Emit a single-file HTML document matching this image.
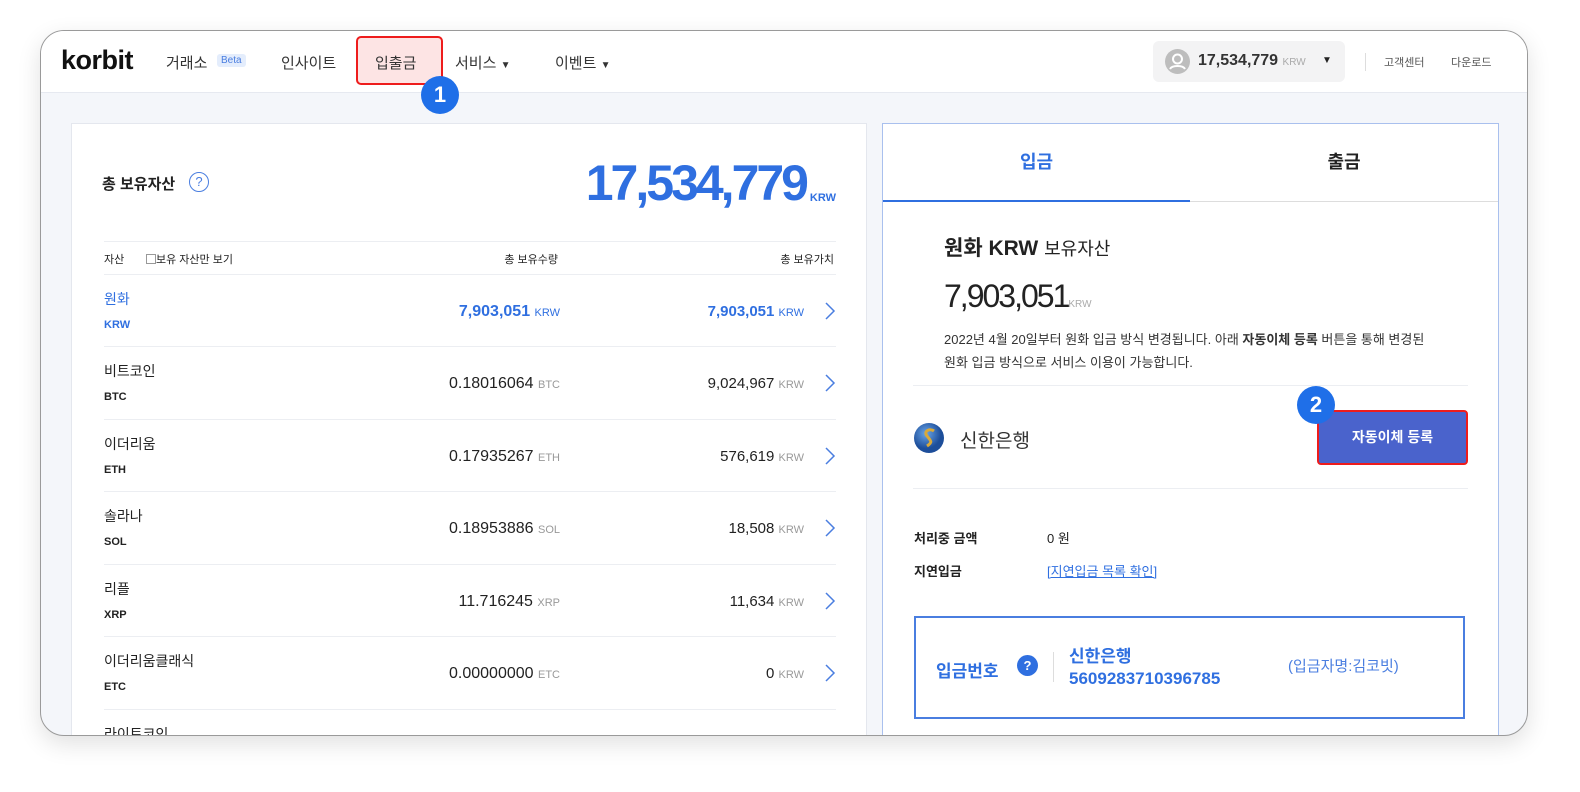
<!DOCTYPE html>
<html><head><meta charset="utf-8"><style>
*{box-sizing:border-box;margin:0;padding:0}
body{width:1580px;height:792px;background:#fff;font-family:"Liberation Sans","Noto Sans CJK KR",sans-serif;color:#222;position:relative;overflow:hidden}
.frame{position:absolute;left:40px;top:30px;width:1488px;height:706px;border:1px solid #9a9a9a;border-radius:24px;overflow:hidden;background:#f4f6fa;box-shadow:0 8px 24px rgba(0,0,0,.12)}
.hdr{position:absolute;left:0;top:0;right:0;height:62px;background:#fff;border-bottom:1px solid #e6e9f0}
.a{position:absolute;white-space:nowrap}
.lp{position:absolute;left:30px;top:92px;width:796px;height:640px;background:#fff;border:1px solid #e4e7ee}
.rp{position:absolute;left:841px;top:92px;width:617px;height:640px;background:#fff;border:1px solid #a9c0ee}
.row{position:absolute;left:32px;width:732px;height:72px;border-top:1px solid #eceef2}
.nm{position:absolute;left:0;top:14px;font-size:14px}
.cd{position:absolute;left:0;top:44px;font-size:11px;font-weight:bold}
.q{position:absolute;right:276px;top:28px;font-size:16px}
.v{position:absolute;right:32px;top:28px;font-size:15px}
.u{font-size:11px;color:#999}
.chev{position:absolute;right:0;top:27px;width:12px;height:18px}
.badge{position:absolute;width:38px;height:38px;border-radius:50%;background:#1f6fe8;color:#fff;font-weight:bold;font-size:22px;text-align:center;line-height:38px}
</style></head><body>
<div class="frame">
 <div class="hdr">
  <div class="a" style="left:20px;top:14px;font-size:27px;font-weight:bold;letter-spacing:-0.5px;color:#111">korbit</div>
  <div class="a" style="left:125px;top:21px;font-size:15px;color:#333">거래소</div>
  <div class="a" style="left:176px;top:23px;font-size:10px;color:#4a7ee0;background:#e4edfc;padding:1px 4px;border-radius:3px">Beta</div>
  <div class="a" style="left:240px;top:21px;font-size:15px;color:#333">인사이트</div>
  <div class="a" style="left:315px;top:5px;width:87px;height:49px;border:2px solid #ee1c1c;border-radius:5px;background:#fde4e4"></div>
  <div class="a" style="left:334px;top:21px;font-size:15px;color:#333">입출금</div>
  <div class="a" style="left:414px;top:21px;font-size:15px;color:#333">서비스 <span style="font-size:10px">▼</span></div>
  <div class="a" style="left:514px;top:21px;font-size:15px;color:#333">이벤트 <span style="font-size:10px">▼</span></div>
  <div class="a" style="left:1112px;top:10px;width:192px;height:41px;background:#f3f3f4;border-radius:6px"></div>
  <svg class="a" style="left:1124px;top:18px" width="25" height="25" viewBox="0 0 25 25"><circle cx="12.5" cy="12.5" r="12.5" fill="#bdbdbd"/><circle cx="12.5" cy="10" r="4.5" fill="none" stroke="#fff" stroke-width="2"/><path d="M5 20c2-4 13-4 15 0" fill="none" stroke="#fff" stroke-width="2"/></svg>
  <div class="a" style="left:1157px;top:21px;font-size:16px;font-weight:bold;color:#333">17,534,779 <span style="font-size:10px;color:#aaa;font-weight:normal">KRW</span></div>
  <div class="a" style="left:1281px;top:24px;font-size:10px">▼</div>
  <div class="a" style="left:1324px;top:22px;width:1px;height:18px;background:#ddd"></div>
  <div class="a" style="left:1343px;top:23px;font-size:11px;color:#555">고객센터</div>
  <div class="a" style="left:1410px;top:23px;font-size:11px;color:#555">다운로드</div>
 </div>
 <div class="badge" style="left:380px;top:45px">1</div>

 <div class="lp">
  <div class="a" style="left:30px;top:49px;font-size:15px;font-weight:bold">총 보유자산</div>
  <div class="a" style="left:117px;top:48px;width:20px;height:20px;border:1.5px solid #4a7ee0;border-radius:50%;color:#4a7ee0;font-size:13px;text-align:center;line-height:17px">?</div>
  <div class="a" style="right:60px;top:30px;font-size:50px;font-weight:bold;color:#2f6fe0;letter-spacing:-3px">17,534,779</div>
  <div class="a" style="right:30px;top:68px;font-size:11px;color:#2f6fe0;font-weight:bold">KRW</div>
  <div class="a" style="left:32px;top:117px;width:732px;height:1px;background:#eceef2"></div>
  <div class="a" style="left:32px;top:127px;font-size:11px">자산</div>
  <div class="a" style="left:74px;top:127px;font-size:11px"><span style="display:inline-block;width:10px;height:10px;border:1px solid #999;vertical-align:-1px"></span>보유 자산만 보기</div>
  <div class="a" style="right:308px;top:127px;font-size:11px">총 보유수량</div>
  <div class="a" style="right:32px;top:127px;font-size:11px">총 보유가치</div>
  <div class="row" style="top:150px"><div class="nm" style="color:#2f6fe0">원화</div><div class="cd" style="color:#2f6fe0">KRW</div><div class="q" style="color:#2f6fe0;font-weight:bold">7,903,051 <span class="u" style="color:#2f6fe0;font-weight:normal">KRW</span></div><div class="v" style="color:#2f6fe0;font-weight:bold">7,903,051 <span class="u" style="color:#2f6fe0;font-weight:normal">KRW</span></div><svg class="chev" viewBox="0 0 12 18"><path d="M2 1l8 8-8 8" fill="none" stroke="#4a7ee0" stroke-width="1.5"/></svg></div>
  <div class="row" style="top:222px"><div class="nm">비트코인</div><div class="cd">BTC</div><div class="q">0.18016064 <span class="u">BTC</span></div><div class="v">9,024,967 <span class="u">KRW</span></div><svg class="chev" viewBox="0 0 12 18"><path d="M2 1l8 8-8 8" fill="none" stroke="#4a7ee0" stroke-width="1.5"/></svg></div>
  <div class="row" style="top:295px"><div class="nm">이더리움</div><div class="cd">ETH</div><div class="q">0.17935267 <span class="u">ETH</span></div><div class="v">576,619 <span class="u">KRW</span></div><svg class="chev" viewBox="0 0 12 18"><path d="M2 1l8 8-8 8" fill="none" stroke="#4a7ee0" stroke-width="1.5"/></svg></div>
  <div class="row" style="top:367px"><div class="nm">솔라나</div><div class="cd">SOL</div><div class="q">0.18953886 <span class="u">SOL</span></div><div class="v">18,508 <span class="u">KRW</span></div><svg class="chev" viewBox="0 0 12 18"><path d="M2 1l8 8-8 8" fill="none" stroke="#4a7ee0" stroke-width="1.5"/></svg></div>
  <div class="row" style="top:440px"><div class="nm">리플</div><div class="cd">XRP</div><div class="q">11.716245 <span class="u">XRP</span></div><div class="v">11,634 <span class="u">KRW</span></div><svg class="chev" viewBox="0 0 12 18"><path d="M2 1l8 8-8 8" fill="none" stroke="#4a7ee0" stroke-width="1.5"/></svg></div>
  <div class="row" style="top:512px"><div class="nm">이더리움클래식</div><div class="cd">ETC</div><div class="q">0.00000000 <span class="u">ETC</span></div><div class="v">0 <span class="u">KRW</span></div><svg class="chev" viewBox="0 0 12 18"><path d="M2 1l8 8-8 8" fill="none" stroke="#4a7ee0" stroke-width="1.5"/></svg></div>
  <div class="row" style="top:585px"><div class="nm">라이트코인</div></div>
 </div>

 <div class="rp">
  <div class="a" style="left:0;top:0;width:307px;height:78px;border-bottom:2px solid #2f6fe0;text-align:center;line-height:76px;font-size:18px;font-weight:bold;color:#2f6fe0">입금</div>
  <div class="a" style="left:307px;top:0;width:308px;height:78px;border-bottom:1px solid #ddd;text-align:center;line-height:76px;font-size:18px;font-weight:bold">출금</div>
  <div class="a" style="left:61px;top:108px;font-size:21px;font-weight:bold">원화 KRW <span style="font-weight:normal;font-size:18px">보유자산</span></div>
  <div class="a" style="left:61px;top:154px;font-size:32px;letter-spacing:-2px">7,903,051<span style="font-size:10px;color:#aaa;letter-spacing:0">KRW</span></div>
  <div class="a" style="left:61px;top:204px;font-size:13px;line-height:23px;color:#333">2022년 4월 20일부터 원화 입금 방식 변경됩니다. 아래 <b>자동이체 등록</b> 버튼을 통해 변경된<br>원화 입금 방식으로 서비스 이용이 가능합니다.</div>
  <div class="a" style="left:30px;top:261px;width:555px;height:1px;background:#eceef2"></div>
  <svg class="a" style="left:30px;top:298px" width="32" height="32" viewBox="0 0 32 32"><defs><radialGradient id="g" cx=".4" cy=".35"><stop offset="0" stop-color="#6aa6e8"/><stop offset="1" stop-color="#1d4e9a"/></radialGradient></defs><circle cx="16" cy="16" r="15" fill="url(#g)"/><path d="M21 9c-4-3-11 0-7 5s6 6 0 10" fill="none" stroke="#d9a93a" stroke-width="3"/></svg>
  <div class="a" style="left:77px;top:302px;font-size:19px;color:#333">신한은행</div>
  <div class="a" style="left:434px;top:286px;width:151px;height:55px;border:2px solid #ee1c1c;border-radius:4px;background:#4a63cc;color:#fff;font-size:14px;font-weight:bold;text-align:center;line-height:51px">자동이체 등록</div>
  <div class="a" style="left:30px;top:364px;width:555px;height:1px;background:#eceef2"></div>
  <div class="a" style="left:31px;top:404px;font-size:13px;font-weight:bold">처리중 금액</div>
  <div class="a" style="left:164px;top:404px;font-size:13px">0 원</div>
  <div class="a" style="left:31px;top:437px;font-size:13px;font-weight:bold">지연입금</div>
  <div class="a" style="left:164px;top:437px;font-size:13px;color:#2f6fe0;text-decoration:underline">[지연입금 목록 확인]</div>
  <div class="a" style="left:31px;top:492px;width:551px;height:103px;border:2px solid #4a7ee0"></div>
  <div class="a" style="left:53px;top:533px;font-size:17px;font-weight:bold;color:#2f6fe0">입금번호</div>
  <div class="a" style="left:134px;top:531px;width:21px;height:21px;border-radius:50%;background:#2f6fe0;color:#fff;font-size:13px;font-weight:bold;text-align:center;line-height:21px">?</div>
  <div class="a" style="left:170px;top:528px;width:1px;height:30px;background:#ddd"></div>
  <div class="a" style="left:186px;top:522px;font-size:17px;font-weight:bold;color:#2f6fe0;line-height:22px">신한은행<br>5609283710396785</div>
  <div class="a" style="left:405px;top:531px;font-size:15px;color:#4a7ee0">(입금자명:김코빗)</div>
 </div>
 <div class="badge" style="left:1256px;top:355px">2</div>
</div>
</body></html>
